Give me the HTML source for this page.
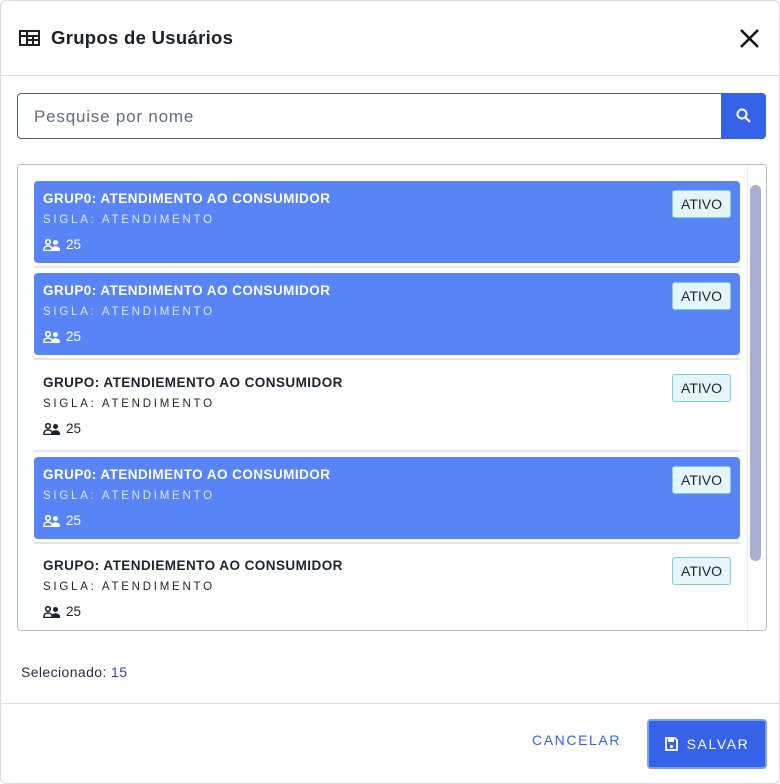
<!DOCTYPE html>
<html><head><meta charset="utf-8"><style>
*{box-sizing:border-box;margin:0;padding:0}
body{width:780px;height:784px;background:#fff;font-family:"Liberation Sans",sans-serif;position:relative;overflow:hidden;color:#1d2330}
.frame{position:absolute;left:0;top:0;width:780px;height:784px;border:1px solid #d5d8e6;border-radius:6px}
.hdr{position:absolute;left:0;top:0;width:780px;height:76px;border-bottom:1px solid #dcdde8}
.title{position:absolute;left:51px;top:27px;font-size:18.5px;font-weight:bold;color:#1b2029;letter-spacing:.3px}
.search{position:absolute;left:17px;top:93px;width:706px;height:46px;border:1px solid #545c75;border-radius:4px 0 0 4px}
.search span{position:absolute;left:16px;top:13px;font-size:17px;color:#646a82;letter-spacing:.8px}
.sbtn{position:absolute;left:721px;top:93px;width:45px;height:46px;background:#3462e8;border-radius:0 4px 4px 0}
.list{position:absolute;left:17px;top:164px;width:750px;height:467px;border:1px solid #b5bad6;border-radius:4px;overflow:hidden}
.item{position:absolute;left:16px;width:706px;height:82px;border-radius:4px}
.item.sel{background:#5884f5;color:#fff}
.item .t{position:absolute;left:9px;top:10px;font-size:13.5px;font-weight:bold;letter-spacing:.45px}
.item .s{position:absolute;left:9px;top:33px;font-size:11.5px;letter-spacing:2.75px}
.item.sel .s{color:#dfe7ff}
.item .c{position:absolute;left:9px;top:56px;font-size:13.5px;display:flex;align-items:center;gap:5px}
.badge{position:absolute;left:638px;top:9px;width:59px;height:28px;background:#e4f6f9;border:1px solid #7fd0dd;border-radius:3px;color:#1d2330;font-size:14px;text-align:center;line-height:26px}
.sepr{position:absolute;left:16px;width:706px;height:2px;background:#e2e4ef}
.track{position:absolute;left:729px;top:0;width:18px;height:467px;border-left:1px solid #eceef4}
.thumb{position:absolute;left:732px;top:20px;width:11px;height:376px;background:#a9afcc;border-radius:6px}
.selc{position:absolute;left:21px;top:664px;font-size:14px;color:#2a2f3f;letter-spacing:.4px}
.selc b{font-weight:normal;color:#34489a}
.ftr{position:absolute;left:0;top:703px;width:780px;height:1px;background:#dcdde8}
.cancel{position:absolute;left:532px;top:732px;font-size:14px;letter-spacing:1.6px;color:#3562e9}
.save{position:absolute;left:647px;top:719px;width:120px;height:50px;background:#3562e9;border:2px solid #7ea0f2;border-radius:4px;color:#fff;font-size:14px;letter-spacing:1.6px;display:flex;align-items:center;justify-content:center;gap:9px}
</style></head><body>
<div class="frame"></div>
<div class="hdr">
<svg style="position:absolute;left:19px;top:30px" width="21" height="16" viewBox="0 0 21 16"><rect x="1" y="1" width="19" height="14" fill="none" stroke="#1b2029" stroke-width="2"/><rect x="1" y="5" width="19" height="2" fill="#1b2029"/><rect x="7" y="1" width="2" height="14" fill="#1b2029"/><rect x="13" y="5" width="2" height="10" fill="#1b2029"/><rect x="9" y="9" width="11" height="2" fill="#1b2029"/></svg>
<div class="title">Grupos de Usuários</div>
<svg style="position:absolute;left:739px;top:28px" width="21" height="21" viewBox="0 0 21 21"><path d="M2 2L19 19M19 2L2 19" stroke="#111" stroke-width="2.6"/></svg>
</div>
<div class="search"><span>Pesquise por nome</span></div>
<div class="sbtn"><svg style="position:absolute;left:15px;top:15px" width="15" height="15" viewBox="0 0 15 15"><circle cx="6" cy="6" r="4.5" fill="none" stroke="#fff" stroke-width="2"/><path d="M9.5 9.5L14 14" stroke="#fff" stroke-width="2.2"/></svg></div>
<div class="list">
<div class="thumb"></div><div class="track"></div>

<div class="item sel" style="top:16px"><div class="t">GRUP0: ATENDIMENTO AO CONSUMIDOR</div><div class="s">SIGLA: ATENDIMENTO</div><div class="c"><svg width="18" height="12" viewBox="0 0 18 12"><circle cx="5" cy="3" r="2.3" fill="none" stroke="currentColor" stroke-width="1.6"/><path d="M1 11.5v-1.5c0-2 2-3 4-3s4 1 4 3v1.5z" fill="none" stroke="currentColor" stroke-width="1.5"/><circle cx="12.5" cy="3.5" r="2.5" fill="currentColor"/><path d="M8.5 12v-1.5c0-2 2-3.2 4-3.2s4.5 1.2 4.5 3.2V12z" fill="currentColor"/></svg>25</div><div class="badge">ATIVO</div></div>
<div class="sepr" style="top:101px"></div>
<div class="item sel" style="top:108px"><div class="t">GRUP0: ATENDIMENTO AO CONSUMIDOR</div><div class="s">SIGLA: ATENDIMENTO</div><div class="c"><svg width="18" height="12" viewBox="0 0 18 12"><circle cx="5" cy="3" r="2.3" fill="none" stroke="currentColor" stroke-width="1.6"/><path d="M1 11.5v-1.5c0-2 2-3 4-3s4 1 4 3v1.5z" fill="none" stroke="currentColor" stroke-width="1.5"/><circle cx="12.5" cy="3.5" r="2.5" fill="currentColor"/><path d="M8.5 12v-1.5c0-2 2-3.2 4-3.2s4.5 1.2 4.5 3.2V12z" fill="currentColor"/></svg>25</div><div class="badge">ATIVO</div></div>
<div class="sepr" style="top:193px"></div>
<div class="item" style="top:200px"><div class="t">GRUPO: ATENDIEMENTO AO CONSUMIDOR</div><div class="s">SIGLA: ATENDIMENTO</div><div class="c"><svg width="18" height="12" viewBox="0 0 18 12"><circle cx="5" cy="3" r="2.3" fill="none" stroke="currentColor" stroke-width="1.6"/><path d="M1 11.5v-1.5c0-2 2-3 4-3s4 1 4 3v1.5z" fill="none" stroke="currentColor" stroke-width="1.5"/><circle cx="12.5" cy="3.5" r="2.5" fill="currentColor"/><path d="M8.5 12v-1.5c0-2 2-3.2 4-3.2s4.5 1.2 4.5 3.2V12z" fill="currentColor"/></svg>25</div><div class="badge">ATIVO</div></div>
<div class="sepr" style="top:285px"></div>
<div class="item sel" style="top:292px"><div class="t">GRUP0: ATENDIMENTO AO CONSUMIDOR</div><div class="s">SIGLA: ATENDIMENTO</div><div class="c"><svg width="18" height="12" viewBox="0 0 18 12"><circle cx="5" cy="3" r="2.3" fill="none" stroke="currentColor" stroke-width="1.6"/><path d="M1 11.5v-1.5c0-2 2-3 4-3s4 1 4 3v1.5z" fill="none" stroke="currentColor" stroke-width="1.5"/><circle cx="12.5" cy="3.5" r="2.5" fill="currentColor"/><path d="M8.5 12v-1.5c0-2 2-3.2 4-3.2s4.5 1.2 4.5 3.2V12z" fill="currentColor"/></svg>25</div><div class="badge">ATIVO</div></div>
<div class="sepr" style="top:377px"></div>
<div class="item" style="top:383px"><div class="t">GRUPO: ATENDIEMENTO AO CONSUMIDOR</div><div class="s">SIGLA: ATENDIMENTO</div><div class="c"><svg width="18" height="12" viewBox="0 0 18 12"><circle cx="5" cy="3" r="2.3" fill="none" stroke="currentColor" stroke-width="1.6"/><path d="M1 11.5v-1.5c0-2 2-3 4-3s4 1 4 3v1.5z" fill="none" stroke="currentColor" stroke-width="1.5"/><circle cx="12.5" cy="3.5" r="2.5" fill="currentColor"/><path d="M8.5 12v-1.5c0-2 2-3.2 4-3.2s4.5 1.2 4.5 3.2V12z" fill="currentColor"/></svg>25</div><div class="badge">ATIVO</div></div>
</div>
<div class="selc">Selecionado: <b>15</b></div>
<div class="ftr"></div>
<div class="cancel">CANCELAR</div>
<div class="save"><svg width="13" height="14" viewBox="0 0 13 14"><path d="M1 1h9l2 2v10H1z" fill="none" stroke="#fff" stroke-width="1.8"/><rect x="3" y="2" width="6" height="3" fill="#fff"/><circle cx="6.5" cy="9.5" r="1.6" fill="#fff"/></svg>SALVAR</div>
</body></html>
